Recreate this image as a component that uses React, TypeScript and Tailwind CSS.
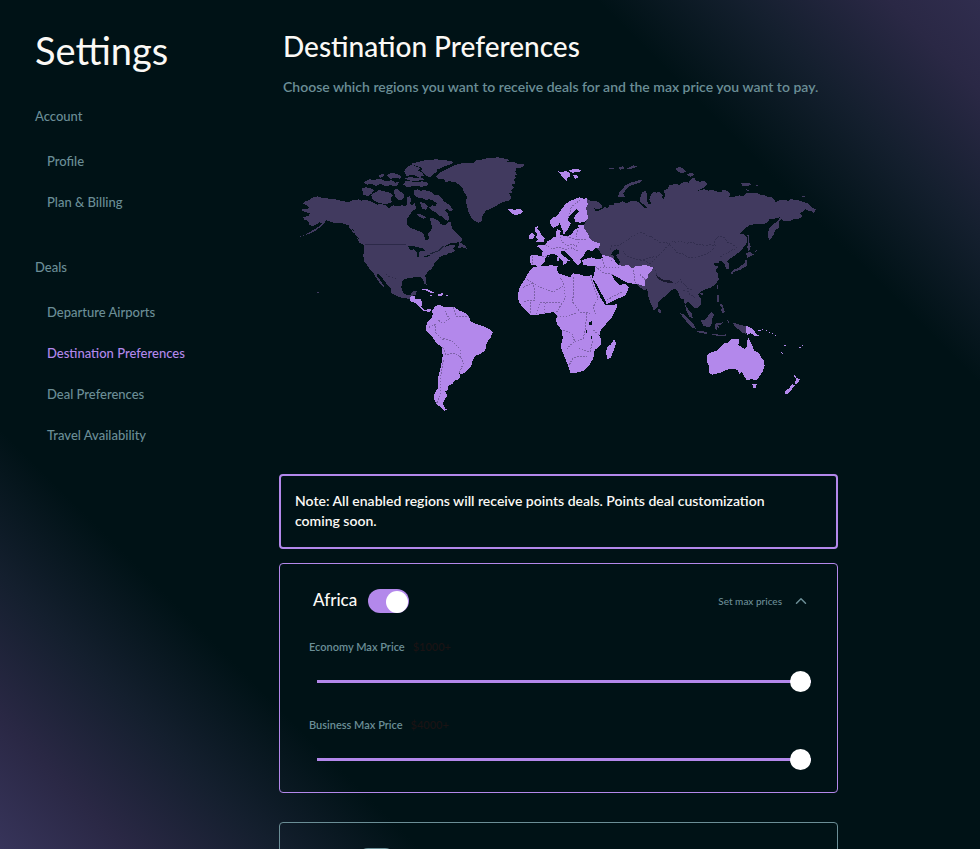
import { useState } from "react";
import { ChevronUp } from "lucide-react";

const account = ["Profile", "Plan & Billing"];
const deals = ["Departure Airports", "Destination Preferences", "Deal Preferences", "Travel Availability"];

function NavGroup({ title, items, active }: { title: string; items: string[]; active?: string }) {
  return (
    <section>
      <h2 className="leading-5">{title}</h2>
      <ul className="mt-[25px] ml-3 flex flex-col gap-[21px]">
        {items.map((item) => (
          <li key={item} className="h-5 leading-5">
            <a href="#" className={item === active ? "text-[#b388eb]" : "hover:text-white"}>
              {item}
            </a>
          </li>
        ))}
      </ul>
    </section>
  );
}

function WorldMap() {
  return (
    <svg viewBox="837 390 1677 930" className="block w-full" shapeRendering="crispEdges" role="img" aria-label="World map">
      {/* disabled regions */}
      <g fill="#413a5f">
        {/* north america */}
        <g transform="translate(870 420)">
          <path d="M30 290 44 285 60 276 75 267 90 257 96 250 88 247 78 254 68 258 58 254 55 244 42 238 40 232 55 228 60 220 50 217 36 212 38 206 52 206 58 202 50 196 38 191 44 184 58 180 70 171 84 169 96 174 118 176 140 179 160 184 176 186 188 181 206 178 214 182 228 179 238 183 250 188 262 194 274 192 286 196 296 204 310 196 326 199 338 195 346 200 352 190 352 172 358 168 364 178 360 192 368 196 374 188 378 206 366 214 358 226 350 238 350 252 362 264 378 270 396 277 403 284 404 298 412 300 417 294 414 280 424 272 426 258 422 246 420 234 434 236 446 242 452 252 466 256 474 246 482 246 486 264 496 276 508 288 516 296 514 306 498 308 484 308 472 314 462 322 474 318 486 314 496 316 490 326 496 332 486 338 474 340 470 346 460 346 448 352 444 360 434 368 430 378 424 388 414 394 406 406 408 420 410 434 404 432 398 418 392 412 378 410 362 414 346 416 336 424 334 444 340 458 350 466 362 464 368 454 380 452 378 464 366 468 362 478 346 474 330 472 312 464 304 458 302 446 294 436 284 424 274 410 264 402 260 406 270 420 280 434 284 442 276 438 266 424 256 410 250 398 240 388 230 374 222 364 220 346 222 328 222 318 212 308 206 296 196 284 190 270 180 258 166 252 150 248 132 248 118 244 108 240 104 248 92 260 76 272 60 280 44 286Z" />
          {/* arctic islands */}
          <path d="M216 146 226 142 240 144 252 150 246 160 234 168 220 164Z M244 164 258 156 268 150 284 154 300 158 308 166 302 176 306 186 288 192 270 190 256 184 246 176Z M312 150 322 146 330 154 340 160 344 172 334 180 322 178 314 166Z M220 128 238 118 256 120 250 130 232 134Z M244 130 258 118 274 118 290 124 304 120 316 128 328 126 320 138 302 136 286 138 272 132 258 138Z M264 108 280 100 284 108 270 114Z M290 106 304 98 320 102 334 108 330 116 314 114 302 116Z M340 134 348 122 362 124 380 126 398 124 414 128 412 138 394 140 372 138 352 142Z M344 116 360 110 376 114 392 112 404 118 384 122 360 122Z M342 94 350 82 366 74 378 80 392 84 384 92 396 98 402 106 388 112 374 106 360 104 350 110Z M360 72 384 66 410 60 438 58 466 60 492 66 480 74 464 78 454 84 442 88 440 96 428 104 420 112 404 104 392 92 398 84 378 78Z" />
          <path d="M370 152 384 148 392 154 398 150 412 152 424 156 434 164 446 166 456 174 462 184 474 192 482 200 490 210 480 214 470 206 466 212 474 222 478 234 474 244 464 238 456 230 446 226 436 216 424 210 418 202 428 196 438 200 440 190 430 182 418 178 406 180 398 174 386 174 374 168Z M390 186 406 190 414 200 408 210 396 206Z M380 222 396 224 408 232 400 236 386 230Z M396 154 406 160 400 168 392 162Z" />
          <path d="M504 324 508 306 518 312 526 318 530 326 518 322Z M172 254 184 264 196 282 188 276Z M200 292 216 304 222 316 208 308Z M80 454 87 457 84 461Z" />
          {/* greenland */}
          <path d="M438 110 448 98 470 88 494 76 520 68 552 70 556 62 578 58 596 54 624 52 646 56 660 60 650 66 672 66 686 72 708 74 690 84 680 84 676 96 682 104 670 108 680 112 672 120 676 130 664 134 672 142 664 150 666 158 656 160 662 168 664 176 656 182 640 186 628 192 614 200 602 206 588 212 580 222 576 232 574 246 564 248 552 242 544 232 538 222 534 210 530 196 528 182 532 170 522 158 518 146 508 134 494 126 478 124 466 126 462 118 448 118Z" />
          <path d="M224 314H348" stroke="#2c2948" strokeWidth="4" />
          <path d="M354 318 372 318 382 322 396 324 408 334 394 332 386 336 388 352 380 352 380 336 372 328 360 330Z M396 352 412 346 422 344 414 350Z" fill="#00151a" />
          <path d="M420 342 446 332 460 318" fill="none" stroke="#1b2136" strokeWidth="3" />
          <path d="M288 402 296 410 310 412 318 418" fill="none" stroke="#25233f" strokeWidth="2" strokeDasharray="4 6" />
        </g>
        {/* northern and eastern asia */}
        <g transform="translate(1920 450)">
          <path d="M-162 145 -148 152 -130 154 -116 162 -114 172 -126 178 -140 174 -132 184 -118 180 -106 172 -96 174 -92 164 -80 166 -76 158 -64 160 -52 154 -38 160 -28 152 -16 152 -6 156 4 164 14 176 22 172 12 164 2 158 0 144 6 128 16 122 22 132 20 150 26 164 34 160 28 148 32 136 40 126 50 128 60 126 68 136 64 144 72 146 76 134 70 122 84 116 88 106 104 102 118 104 132 96 146 98 152 88 162 83 168 92 180 96 192 92 202 102 190 114 168 124 192 118 206 122 216 118 228 124 244 128 246 120 262 122 270 132 268 140 284 140 298 136 310 138 320 128 340 130 350 128 360 134 372 134 384 142 396 142 404 150 408 158 414 152 430 150 446 152 452 148 474 150 490 156 502 160 510 168 516 172 528 178 522 190 514 184 504 182 496 178 488 186 480 188 487 200 476 206 462 206 450 214 432 214 424 206 416 218 418 232 406 240 400 256 388 272 384 258 386 238 396 226 412 214 420 202 404 206 388 208 382 218 372 222 348 222 328 226 314 236 298 252 310 252 320 260 322 276 314 288 302 302 286 316 272 324 262 334 268 344 268 356 258 356 254 344 248 336 240 332 234 340 220 338 222 346 236 350 226 360 234 372 236 388 228 402 214 412 196 418 180 426 174 434 182 446 184 462 174 474 164 476 154 464 144 456 136 464 144 478 154 488 158 504 148 500 140 484 134 462 132 446 122 446 114 426 104 416 92 422 84 432 68 444 56 454 52 472 42 482 34 464 26 444 22 418 10 420 -4 408 -60 360 -80 325 -110 318 -125 300 -150 275 -172 235 -158 205 -162 180Z" />
          <path d="M-66 140 -62 128 -54 118 -44 106 -28 98 -8 92 6 90 4 96 -14 102 -30 108 -42 118 -50 130 -46 140Z M106 56 118 50 130 56 138 66 124 70 112 64Z M140 74 154 68 164 74 152 80Z M302 100 320 98 334 102 326 108 308 108Z M344 104 358 104 350 108Z M316 118 332 120 322 124Z M484 138 496 138 490 142Z M-96 56 -80 52 -76 58Z M-66 54 -50 48 -48 56 -60 60Z M-40 56 -20 46 -8 50 -26 56Z" />
          {/* sakhalin and japan */}
          <path d="M322 254 328 258 328 276 332 290 326 306 322 292 324 272Z M318 310 330 306 342 314 328 320 322 326Z M318 324 322 336 320 348 310 354 300 360 286 364 276 368 278 360 294 354 304 346 314 340Z M272 366 280 368 276 376Z M344 304 352 300 346 308Z M232 404 236 408 232 418Z" />
          {/* south east asia islands */}
          <path d="M230 436 238 436 238 448 234 460 230 450Z M240 462 248 464 252 480 256 486 248 490 242 480 248 474 240 468Z M180 430 190 430 186 436Z M54 476 62 480 62 488 56 488Z M120 490 132 494 148 510 162 524 168 536 158 534 144 520 132 506Z M166 542 184 542 204 548 200 552 178 548Z M182 512 196 508 204 498 214 486 222 494 216 506 216 520 208 532 190 528Z M226 524 232 518 244 518 252 516 244 524 234 524 240 536 232 530 230 540 226 536Z M212 552 228 552 244 556 260 552 256 558 232 558Z M262 510 268 514 264 522Z M278 518 294 522 304 526 318 528 318 552 306 548 296 538 284 530Z" />
          <g fill="none" stroke="#2c2948" strokeWidth="2" strokeDasharray="6 4">
            <path d="M-90 300-84 286-66 288-50 278-36 270-22 258-10 252 0 248 12 250 20 258 34 258 40 266 54 272 60 278 74 276 88 282 98 274 112 278 122 272 140 280 154 276 168 282 180 282 196 288 212 284 226 288 222 274 232 262 246 258 256 266 262 278 276 282 290 292 M88 284 100 294 110 308 128 312 140 320 156 324 172 320 190 316 206 308 224 292 M88 284 76 294 66 306 50 320 30 322 14 328-10 330-26 322-40 318-52 300 M0 330 18 334 30 342 40 330 52 320 M40 350 46 362 50 376 M104 404 122 388 126 400 136 404 142 416 160 420 M130 420 144 424 150 436 160 438 168 448 M240 322 250 314 262 310 270 302 284 298" />
          </g>
          {/* caspian sea */}
          <path d="M-84 306-72 298-62 300-62 310-72 316-66 326-60 334-64 346-74 346-82 330-76 320-86 314Z" fill="#001419" />
          <path d="M48 374 66 388 92 392 104 400 90 400 66 394 52 384Z" fill="#17192d" />
        </g>
      </g>
      {/* enabled regions */}
      <g fill="#b388eb">
        <g transform="translate(1500 420)">
          {/* scandinavia */}
          <path d="M260 174 260 186 264 192 258 204 262 220 264 234 256 244 240 248 226 246 222 232 230 222 236 214 230 208 222 214 214 224 206 232 204 242 212 250 206 264 200 274 190 276 184 264 180 248 172 258 160 264 152 256 150 242 156 234 168 230 176 220 186 206 196 192 208 184 222 178 238 172 252 176Z" />
          {/* mainland europe */}
          <path d="M224 268 236 264 234 254 250 254 254 268 264 280 268 294 280 304 300 310 298 322 284 326 276 334 264 328 256 336 250 350 240 358 244 366 236 376 228 372 216 356 206 344 192 332 182 332 184 342 196 352 210 362 202 364 198 374 190 364 178 354 168 344 156 342 142 346 134 356 134 366 124 376 112 380 104 374 92 374 90 356 92 346 110 346 126 348 128 334 118 322 108 318 124 314 136 314 142 304 154 298 160 290 168 290 168 278 172 268 182 272 180 284 196 288 212 286Z" />
          <path d="M104 262 114 258 112 268 120 276 126 288 134 296 130 306 108 306 114 298 108 292 112 284 106 274Z M88 284 98 278 104 286 98 298 86 298Z M24 206 36 208 44 210 58 206 70 214 60 222 48 226 36 222 28 214Z M174 94 188 96 196 92 208 98 212 108 202 114 200 124 190 114 182 104Z M206 92 224 86 246 90 238 96 218 98Z M218 106 228 104 236 112 226 116Z M190 366 200 372 188 374Z M172 350 178 354 176 364 170 362Z M188 278 196 276 192 284Z" />
          <path d="M180 290 184 304 200 316 220 314 234 320 M200 288 230 300 262 298 M136 314 156 326 172 322 196 326 M232 270 228 290 236 310 M206 232 214 200 240 180 M196 330 210 322 236 334 M96 348 98 374 M126 348 146 348" fill="none" stroke="#7d62a8" strokeWidth="3" strokeDasharray="5 4" />
        </g>
        <g transform="translate(1230 810)">
          {/* middle east */}
          <path d="M516 -30 530 -34 546 -38 562 -32 580 -36 574 -46 592 -42 606 -38 614 -28 624 -16 640 -12 656 -16 666 -4 678 -12 692 -12 706 -16 716 -12 730 -8 724 4 716 10 712 26 704 34 706 50 690 44 672 42 652 38 636 30 620 20 606 14 614 32 630 46 642 40 656 50 654 62 644 78 624 86 606 94 590 102 584 88 572 66 558 40 548 26 552 14 556 -4 556 -12 536 -12 520 -16Z" />
          {/* africa */}
          <path d="M360 0 374 -10 398 -12 422 -14 444 -12 440 0 446 10 462 16 480 22 488 10 504 12 524 18 546 16 550 34 560 58 572 84 586 106 604 106 622 102 620 114 606 142 588 162 572 180 568 196 574 212 572 226 554 240 550 264 538 286 522 302 500 308 482 310 474 286 464 262 452 232 458 204 456 182 442 164 438 150 442 138 430 126 408 130 384 134 362 134 342 116 326 96 324 74 328 54 344 28Z" />
          <path d="M612 208 618 220 612 238 602 264 592 268 588 248 592 230 602 224Z" />
          {/* south america */}
          <path d="M66 122 76 108 88 104 100 110 118 110 132 110 148 122 164 128 176 138 182 154 198 162 218 168 236 176 248 188 242 202 230 218 226 240 214 250 196 258 188 272 184 288 170 304 156 312 148 310 152 322 144 330 132 332 128 342 116 346 114 360 106 364 112 376 104 388 98 402 106 416 116 420 102 422 92 412 80 402 72 388 74 368 84 356 84 324 92 292 98 258 96 232 78 218 66 200 48 180 50 160 64 146 68 132Z" />
          <path d="M2 78 14 78 16 86 32 86 36 98 34 110 44 120 60 116 66 120 58 126 40 122 28 112 18 100 0 94Z M34 58 48 56 60 62 74 68 64 70 50 62Z M82 72 98 70 100 76 86 78Z M108 76 116 76 112 78Z M60 74 68 76 62 78Z" />
          <g fill="none" stroke="#7d62a8" strokeWidth="3" strokeDasharray="5 4">
            <path d="M340 52 366 40 374 54 374 90 340 94 M352 28 372 42 398 56 430 66 462 46 450 20 M490 22 490 70 M462 50 466 84 440 126 M380 132 392 96 424 96 452 98 M490 70 488 96 510 126 544 130 M440 140 470 138 500 130 M540 20 564 84 550 110 558 134 M360 96 360 128 M402 130 406 96" />
            <path d="M460 180 486 192 494 214 470 236 M478 284 490 262 530 258 M494 214 520 206 526 178 530 130 M506 236 540 246 548 214 M550 180 568 196 M104 122 118 146 100 160 84 150 M130 112 138 138 176 140 M56 172 76 164 78 190 100 210 M100 204 130 216 150 238 152 262 134 250 108 254 98 232 M152 262 160 280 148 308 M100 270 92 320 92 370 80 400" />
            <path d="M556 -10 580 8 612 14 M576 -32 584 -10 M604 -40 606 -22 M670 0 676 38 M706 30 690 14 M590 90 620 74 640 64 M560 -4 582 -8 630 -8" />
          </g>
          <path d="M538 156 546 154 546 164 538 166Z M528 174 532 190 528 188Z M544 196 548 212 544 208Z" fill="#001419" />
        </g>
        <g transform="translate(1920 750)">
          {/* oceania */}
          <path d="M200 318 204 312 218 306 234 300 244 288 252 280 262 280 270 272 276 266 298 266 298 276 294 284 304 290 314 298 320 292 322 272 326 262 332 278 338 290 342 302 356 308 362 320 372 332 374 348 368 364 358 380 350 390 334 388 320 390 312 378 306 366 298 372 292 360 278 356 258 360 242 368 218 374 208 370 208 352 202 338Z M336 402 350 402 348 412 342 416Z" />
          <path d="M318 228 330 232 342 240 348 250 358 258 346 258 332 250 320 256Z M350 242 364 240 370 234 368 240 358 244Z M378 240 382 244 378 244Z M386 244 390 248 386 248Z M396 250 402 252 398 252Z M404 256 408 256 406 258Z M420 304 430 310 430 314 424 310Z M478 292 484 292 480 296Z M432 286 438 286 434 288Z M484 286 490 286 486 288Z M460 374 466 376 470 384 482 388 476 394 468 404 464 398 468 388Z M456 402 464 406 454 420 442 432 432 430 438 422 448 414Z" />
        </g>
      </g>
    </svg>
  );
}

function PriceSlider({ id, label, value, max }: { id: string; label: string; value: string; max: number }) {
  const [price, setPrice] = useState(max);
  return (
    <div>
      <div className="flex h-5 items-center gap-2 text-[11px] font-semibold">
        <label htmlFor={id} className="text-[#6b8e96]">{label}</label>
        <output htmlFor={id} className="text-[#1a1314]">{value}</output>
      </div>
      <input
        id={id}
        type="range"
        min={0}
        max={max}
        value={price}
        onChange={(e) => setPrice(Number(e.target.value))}
        className="mt-3.5 ml-2 block h-[21px] w-[calc(100%-8px)] cursor-pointer appearance-none bg-transparent [&::-webkit-slider-runnable-track]:h-[3px] [&::-webkit-slider-runnable-track]:bg-[#b388eb] [&::-webkit-slider-thumb]:-mt-[9px] [&::-webkit-slider-thumb]:size-[21px] [&::-webkit-slider-thumb]:appearance-none [&::-webkit-slider-thumb]:rounded-full [&::-webkit-slider-thumb]:bg-white"
      />
    </div>
  );
}

function RegionCard({ name, defaultOn }: { name: string; defaultOn: boolean }) {
  const [on, setOn] = useState(defaultOn);
  const key = name.toLowerCase();
  return (
    <section className={`rounded border pt-[25px] pr-[26px] pb-[22px] pl-[29px] ${on ? "border-[#b388eb]" : "border-[#6b8e96]"}`}>
      <div className="flex h-6 items-center">
        <label htmlFor={key} className="ml-1 pb-0.5 text-[17px] leading-5 font-medium text-[#fbf9f5]">{name}</label>
        <input
          id={key}
          type="checkbox"
          role="switch"
          checked={on}
          onChange={() => setOn(!on)}
          className="ml-[11px] flex h-6 w-[41px] cursor-pointer appearance-none items-end rounded-full bg-[#6b8e96] pl-px before:block before:size-[22px] before:rounded-full before:bg-white checked:bg-[#b388eb] checked:pl-[18px]"
        />
        {on && (
          <button type="button" className="ml-auto flex items-center gap-2.5 pr-px text-[10px] font-medium text-[#6b8e96]">
            Set max prices
            <ChevronUp size={18} strokeWidth={2} />
          </button>
        )}
      </div>
      {on && (
        <div className="mt-6 flex flex-col gap-[23px]">
          <PriceSlider id={`${key}-economy`} label="Economy Max Price" value="$1000+" max={1000} />
          <PriceSlider id={`${key}-business`} label="Business Max Price" value="$4000+" max={4000} />
        </div>
      )}
    </section>
  );
}

export default function App() {
  return (
    <div className="flex min-h-screen bg-[#001216] bg-[linear-gradient(45deg,#37345a_0%,#2a2845_7%,#141f2e_15%,#001216_23%,#001216_79%,#141f2e_87%,#2a2845_95%,#302d4e_100%)] bg-fixed font-['Lato','Open_Sans',sans-serif]">
      <aside className="w-[279px] shrink-0 pt-[23px] pl-[35px]">
        <h1 className="text-[38px] leading-[54px] text-[#fbf9f5]">Settings</h1>
        <nav className="mt-[29px] flex flex-col gap-[45px] text-[13px] font-medium text-[#6b8e96]">
          <NavGroup title="Account" items={account} />
          <NavGroup title="Deals" items={deals} active="Destination Preferences" />
        </nav>
      </aside>
      <main className="mr-[142px] min-w-0 flex-1 pt-7 pb-8">
        <header className="pl-1">
          <h2 className="text-[28px] leading-9 font-medium text-[#fbf9f5]">Destination Preferences</h2>
          <p className="mt-[11px] text-sm leading-6 font-semibold text-[#6b8e96]">
            Choose which regions you want to receive deals for and the max price you want to pay.
          </p>
        </header>
        <div className="mt-[31px]">
          <WorldMap />
        </div>
        <p className="mt-[34px] rounded border-2 border-[#b388eb] pt-[15px] pr-6 pb-4 pl-3.5 text-sm leading-5 font-semibold text-[#fbf9f5]">
          Note: All enabled regions will receive points deals. Points deal customization coming soon.
        </p>
        <div className="mt-3.5 flex flex-col gap-[29px]">
          <RegionCard name="Africa" defaultOn />
          <RegionCard name="Asia" defaultOn={false} />
        </div>
      </main>
    </div>
  );
}
